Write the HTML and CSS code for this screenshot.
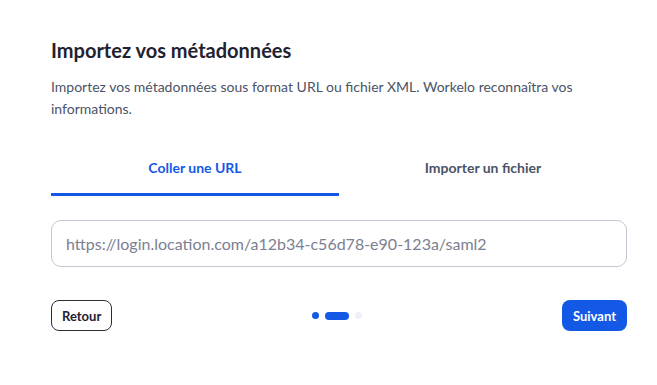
FILE: index.html
```html
<!DOCTYPE html>
<html lang="fr">
  <head>
    <meta charset="UTF-8" />
    <meta name="viewport" content="width=device-width, initial-scale=1.0" />
    <title>Importez vos métadonnées</title>
    <link rel="stylesheet" href="styles.css">
  </head>
  <body>
    <div class="container">
      <div class="header">
        <h1>Importez vos métadonnées</h1>
        <p>Importez vos métadonnées sous format URL ou fichier XML. Workelo reconnaîtra vos informations.</p>
      </div>

      <div class="tabs">
        <button class="tab active">Coller une URL</button>
        <button class="tab">Importer un fichier</button>
      </div>

      <div class="form-group">
        <input type="text" id="url" placeholder="https://login.location.com/a12b34-c56d78-e90-123a/saml2" />
      </div>

      <div class="footer">
        <button class="btn btn-outline">Retour</button>
        <div class="steps">
          <span class="step done"></span>
          <span class="step current"></span>
          <span class="step"></span>
        </div>
        <button class="btn btn-primary">Suivant</button>
      </div>
    </div>
  </body>
</html>
```

FILE: styles.css
```css
* {
  margin: 0;
  padding: 0;
  box-sizing: border-box;
}

body {
  font-family: Lato, "Open Sans", sans-serif;
  background: white;
  color: #1f2230;
}

.container {
  width: 576px;
  margin-left: 51px;
  padding-top: 37px;
}

.header h1 {
  font-size: 20px;
  font-weight: 700;
  line-height: 26px;
  color: #1f2230;
  margin-bottom: 13px;
}

.header p {
  font-size: 14px;
  line-height: 22px;
  color: #4b5366;
}

.tabs {
  display: flex;
  margin-top: 27px;
}

.tab {
  flex: 1;
  background: none;
  border: none;
  border-bottom: 3px solid transparent;
  font-family: inherit;
  font-size: 14px;
  font-weight: 700;
  color: #4b5366;
  height: 49px;
  padding-bottom: 6px;
  cursor: pointer;
}

.tab.active {
  color: #1458e6;
  border-bottom-color: #1458e6;
}

.form-group {
  margin-top: 24px;
}

.form-group input {
  width: 100%;
  height: 47px;
  padding: 0 14px;
  border: 1px solid #c3c7d1;
  border-radius: 10px;
  font-family: inherit;
  font-size: 16px;
  color: #1f2230;
}

.form-group input::placeholder {
  color: #7b8091;
}

.footer {
  display: flex;
  align-items: center;
  justify-content: space-between;
  margin-top: 33px;
}

.btn {
  height: 31px;
  padding: 0 10px;
  border-radius: 8px;
  font-family: inherit;
  font-size: 13px;
  font-weight: 700;
  cursor: pointer;
}

.btn-outline {
  background: white;
  border: 1px solid #2a2d36;
  color: #1f2230;
}

.btn-primary {
  background: #1458e6;
  border: none;
  color: white;
  padding: 0 11px;
}

.steps {
  display: flex;
  align-items: center;
  gap: 6px;
}

.step {
  width: 7px;
  height: 7px;
  border-radius: 4px;
  background: #eef0f8;
}

.step.done {
  background: #1458e6;
}

.step.current {
  width: 24px;
  height: 8px;
  background: #1458e6;
}
```
